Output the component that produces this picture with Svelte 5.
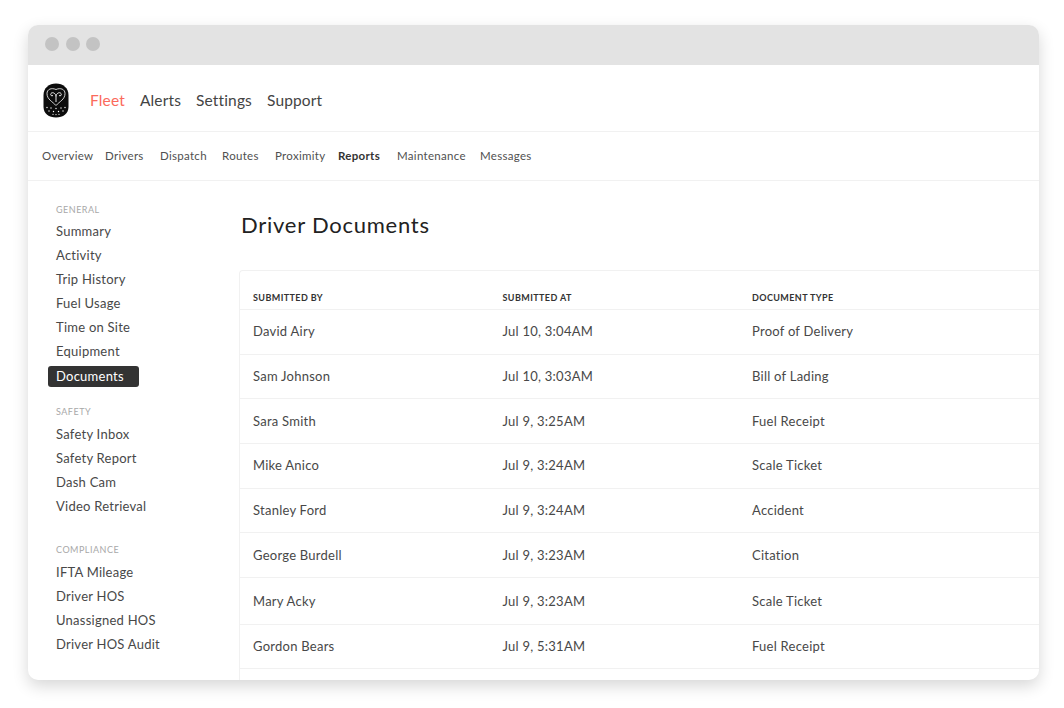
<script>
    const topLinks = ["Fleet", "Alerts", "Settings", "Support"];
    // cell width is the distance to the next link, the tabs are not evenly spaced
    const subLinks = [
        { label: "Overview", width: 63 },
        { label: "Drivers", width: 55 },
        { label: "Dispatch", width: 62 },
        { label: "Routes", width: 53 },
        { label: "Proximity", width: 63 },
        { label: "Reports", width: 59 },
        { label: "Maintenance", width: 83 },
        { label: "Messages", width: 53 },
    ];
    const sections = [
        { title: "General", items: ["Summary", "Activity", "Trip History", "Fuel Usage", "Time on Site", "Equipment", "Documents"] },
        { title: "Safety", items: ["Safety Inbox", "Safety Report", "Dash Cam", "Video Retrieval"] },
        { title: "Compliance", items: ["IFTA Mileage", "Driver HOS", "Unassigned HOS", "Driver HOS Audit"] },
    ];
    const rows = [
        ["David Airy", "Jul 10, 3:04AM", "Proof of Delivery"],
        ["Sam Johnson", "Jul 10, 3:03AM", "Bill of Lading"],
        ["Sara Smith", "Jul 9, 3:25AM", "Fuel Receipt"],
        ["Mike Anico", "Jul 9, 3:24AM", "Scale Ticket"],
        ["Stanley Ford", "Jul 9, 3:24AM", "Accident"],
        ["George Burdell", "Jul 9, 3:23AM", "Citation"],
        ["Mary Acky", "Jul 9, 3:23AM", "Scale Ticket"],
        ["Gordon Bears", "Jul 9, 5:31AM", "Fuel Receipt"],
    ];
</script>

<div class="page">
    <div class="window">
        <div class="titlebar">
            <span class="dot"></span>
            <span class="dot"></span>
            <span class="dot"></span>
        </div>
        <nav class="topnav">
            <svg class="logo" viewBox="0 0 26 35" width="26" height="35" aria-hidden="true">
                <path d="M13 0.5C20 0.5 25.5 5 25.5 12V24C25.5 30.5 20 34.5 13 34.5S0.5 30.5 0.5 24V12C0.5 5 6 0.5 13 0.5Z" fill="#0c0c0c" />
                <path d="M13 22.5C9.5 18.5 4 16.5 4 10.5C4 6.2 8.5 4.5 13 6.5C17.5 4.5 22 6.2 22 10.5C22 16.5 16.5 18.5 13 22.5Z" fill="none" stroke="#fff" stroke-width=".8" />
                <path d="M13 19V13.5C13 10.5 9.5 8.5 8 10.5C7 12 8.5 13.5 10 12.5M13 13.5C13 10.5 16.5 8.5 18 10.5C19 12 17.5 13.5 16 12.5" fill="none" stroke="#fff" stroke-width=".9" />
                <g fill="#fff">
                    <circle cx="4" cy="24.5" r=".7" /><circle cx="8" cy="25" r=".7" /><circle cx="13" cy="25.5" r=".7" /><circle cx="18" cy="25" r=".7" /><circle cx="22" cy="24.5" r=".7" />
                    <circle cx="6" cy="28" r=".7" /><circle cx="10.5" cy="28.5" r=".7" /><circle cx="15.5" cy="28.5" r=".7" /><circle cx="20" cy="28" r=".7" />
                    <circle cx="10" cy="31.3" r=".6" /><circle cx="13" cy="31.6" r=".6" /><circle cx="16" cy="31.3" r=".6" />
                </g>
            </svg>
            <div class="toplinks">
                {#each topLinks as link, i}
                    <span class:fleet={i === 0}>{link}</span>
                {/each}
            </div>
        </nav>
        <nav class="subnav">
            {#each subLinks as link}
                <span class:bold={link.label === "Reports"} style="width: {link.width}px">{link.label}</span>
            {/each}
        </nav>
        <div class="body">
            <aside class="sidebar">
                {#each sections as section}
                    <div class="section">
                        <div class="section-title">{section.title}</div>
                        {#each section.items as item}
                            <div class="item" class:active={item === "Documents"}>{item}</div>
                        {/each}
                    </div>
                {/each}
            </aside>
            <main class="content">
                <h1>Driver Documents</h1>
                <div class="card">
                    <div class="row head">
                        <span>Submitted By</span>
                        <span>Submitted At</span>
                        <span>Document Type</span>
                    </div>
                    {#each rows as row}
                        <div class="row">
                            {#each row as cell}
                                <span>{cell}</span>
                            {/each}
                        </div>
                    {/each}
                </div>
            </main>
        </div>
    </div>
</div>

<style>
    :global(body) {
        background: #fff;
        font-family: Lato, "Liberation Sans", sans-serif;
    }

    .page {
        width: 1064px;
        height: 708px;
        padding: 25px 25px 28px 28px;
        box-sizing: border-box;
        overflow: hidden;
    }

    .window {
        height: 655px;
        border-radius: 10px;
        background: #fff;
        overflow: hidden;
        display: flex;
        flex-direction: column;
        box-shadow: 0 6px 16px rgba(0, 0, 0, 0.16);
    }

    .titlebar {
        height: 40px;
        flex: none;
        box-sizing: border-box;
        background: #e3e3e3;
        display: flex;
        align-items: center;
        gap: 6.5px;
        padding: 0 17px 2px;
    }

    .dot {
        width: 14px;
        height: 14px;
        border-radius: 50%;
        background: #c3c3c3;
    }

    .topnav {
        height: 67px;
        flex: none;
        box-sizing: border-box;
        border-bottom: 1px solid #f1f1f1;
        display: flex;
        align-items: center;
        padding: 4px 0 0 15px;
    }

    .logo {
        flex: none;
    }

    .toplinks {
        display: flex;
        gap: 15px;
        margin: -1px 0 0 21px;
        font-size: 15.5px;
        letter-spacing: 0.15px;
        color: #444;
    }

    .fleet {
        color: #fb6a5c;
    }

    .subnav {
        height: 49px;
        flex: none;
        box-sizing: border-box;
        border-bottom: 1px solid #f1f1f1;
        display: flex;
        align-items: center;
        padding: 0 0 2px 14px;
        font-size: 11.5px;
        letter-spacing: 0.3px;
        color: #505050;
    }

    .subnav span {
        flex: none;
        white-space: nowrap;
    }

    .bold {
        font-weight: 700;
        color: #333;
    }

    .body {
        flex: 1;
        min-height: 0;
        display: flex;
    }

    .sidebar {
        width: 211px;
        flex: none;
        box-sizing: border-box;
        padding: 23px 0 0 20px;
    }

    .section:nth-child(1) {
        margin-bottom: 19px;
    }

    .section:nth-child(2) {
        margin-bottom: 26px;
    }

    .section-title {
        font-size: 9px;
        line-height: 12px;
        letter-spacing: 0.5px;
        text-transform: uppercase;
        color: #a8a8a8;
        padding-left: 8px;
        margin-bottom: 4px;
    }

    .section:first-child .section-title {
        margin-bottom: 3px;
    }

    .item {
        height: 24px;
        line-height: 24px;
        padding-left: 8px;
        font-size: 13px;
        letter-spacing: 0.25px;
        color: #484848;
    }

    .item.active {
        width: 91px;
        height: 21px;
        line-height: 21px;
        margin-top: 3px;
        box-sizing: border-box;
        background: #333;
        color: #fff;
        border-radius: 3px;
    }

    .content {
        flex: 1;
        min-width: 0;
        overflow: hidden;
        display: flex;
        flex-direction: column;
    }

    h1 {
        margin: 29px 0 0 2px;
        height: 60px;
        flex: none;
        font-size: 22px;
        line-height: 30px;
        font-weight: 400;
        letter-spacing: 0.75px;
        color: #222;
    }

    .card {
        flex: 1;
        min-height: 0;
        border: 1px solid #f1f1f1;
        border-right: 0;
        border-bottom: 0;
        border-radius: 4px 0 0 0;
        overflow: hidden;
    }

    .row {
        display: grid;
        grid-template-columns: repeat(3, 249.5px);
        align-items: center;
        height: 44.67px;
        box-sizing: border-box;
        padding: 0 0 1px 13px;
        border-bottom: 1px solid #f1f1f1;
        font-size: 13px;
        letter-spacing: 0.25px;
        color: #484848;
    }

    /* Mary Acky's row sits a little taller in the list */
    .row:nth-child(8) {
        height: 46.7px;
        padding-bottom: 0;
    }

    .row.head {
        height: 39px;
        padding-top: 14px;
        padding-bottom: 0;
        font-size: 9px;
        font-weight: 700;
        letter-spacing: 0.4px;
        text-transform: uppercase;
        color: #333;
    }
</style>
